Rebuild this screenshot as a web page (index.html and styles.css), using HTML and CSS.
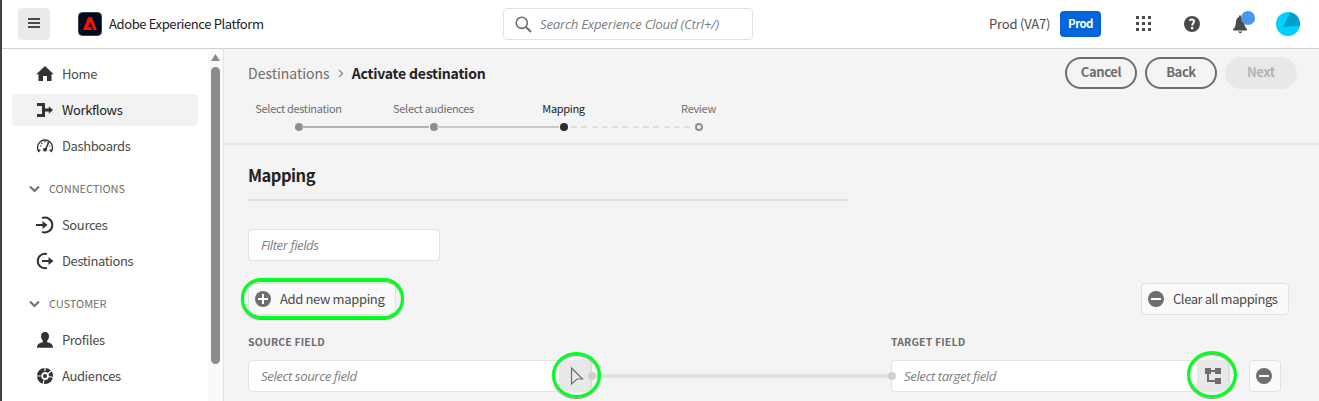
FILE: index.html
```
<!DOCTYPE html>
<html lang="en">
<head>
<meta charset="utf-8">
<title>Adobe Experience Platform</title>
<link rel="stylesheet" href="styles.css">
</head>
<body>
<div class="app">
  <header class="topbar">
    <button class="menu" aria-label="Menu"><svg width="12" height="10"><path d="M0 1h12M0 5h12M0 9h12" stroke="#4b4b4b" stroke-width="2"/></svg></button>
    <svg class="logo" width="24" height="24" viewBox="0 0 24 24"><rect x=".5" y=".5" width="23" height="23" rx="4" fill="#000b1d" stroke="#39414d"/><path d="M10 5.200h4L19 18h-3.600l-3.100-8-2.100 5h2.600l1.200 3H5z" fill="#fa0f00"/></svg>
    <span class="brand">Adobe Experience Platform</span>
    <div class="search"><svg width="17" height="17" viewBox="0 0 17 17" fill="none" stroke="#6e6e6e"><circle cx="6.800" cy="6.800" r="5.600" stroke-width="1.600"/><path d="M11 11l5 5" stroke-width="2"/></svg><span>Search Experience Cloud (Ctrl+/)</span></div>
    <span class="org">Prod (VA7)</span>
    <span class="env">Prod</span>
    <svg class="apps" width="16" height="16" fill="#4b4b4b"><path d="M0 0h3v3H0zM6 0h3v3H6zM12 0h3v3h-3zM0 6h3v3H0zM6 6h3v3H6zM12 6h3v3h-3zM0 12h3v3H0zM6 12h3v3H6zM12 12h3v3h-3z"/></svg>
    <svg class="help" width="16" height="16" viewBox="0 0 16 16"><circle cx="8" cy="8" r="8" fill="#4b4b4b"/><path d="M5.300 4.300Q8 2.700 9.800 4.200C11.400 6 8.200 7 8.200 9.400" fill="none" stroke="#fff" stroke-width="2"/><circle cx="8.100" cy="12.100" r="1.300" fill="#fff"/></svg>
    <svg class="bell" width="24" height="24" viewBox="0 0 24 24"><path d="M1.200 19.500V18c2-1.500 2.500-3.500 2.800-7C4.200 8 5.500 6.500 7 6V4.500h2V6c2.600 1 3.200 3 3.400 6 .2 3 .8 4.600 2.600 6v1.500zM6 20.500h4.500Q8.200 24 6 20.500z" fill="#4b4b4b"/><circle cx="16" cy="7" r="7" fill="#4b96f3"/></svg>
    <svg class="avatar" width="24" height="24" viewBox="0 0 24 24"><circle cx="12" cy="12" r="12" fill="#00cfff"/><path d="M14.200.2A12 12 0 0 1 23.800 14L7 15z" fill="#00a0cc"/></svg>
  </header>
  <div class="body">
    <nav class="sidebar">
      <a class="item"><svg width="18" height="18" viewBox="0 0 18 18" fill="#323232"><path d="M9 1l8.700 8.200H15.500V16h-4.500v-5H7v5H2.500V9.200H.3z"/></svg><span>Home</span></a>
      <a class="item active"><svg width="18" height="18" viewBox="0 0 18 18"><path d="M1 3.500h6.500v11H1M7.500 9H14" fill="none" stroke="#323232" stroke-width="3"/><path d="M12.800 5.300L17 9l-4.200 3.700z" fill="#323232"/></svg><span>Workflows</span></a>
      <a class="item"><svg width="18" height="18" viewBox="0 0 18 18"><path d="M3 15a7.500 7.500 0 1 1 12 0" fill="none" stroke="#323232" stroke-width="1.300"/><path d="M2.200 14.300l2.100-1.500M15.800 14.300l-2.100-1.500" stroke="#323232" stroke-width="1.500"/><path d="M4 9h1.500M5.400 6l1 1M9 4v1.500M12.600 5l-1 1M13 9h1.200" stroke="#323232" stroke-width="1.200"/><path d="M12.500 5.800l-3 6.800" stroke="#323232" stroke-width="1.500"/><circle cx="9" cy="12.700" r="1.900" fill="#323232"/></svg><span>Dashboards</span></a>
      <div class="group"><svg width="12" height="8"><path d="M1 1.500l4.500 4.500L10 1.500" fill="none" stroke="#6e6e6e" stroke-width="2"/></svg><span>CONNECTIONS</span></div>
      <a class="item"><svg width="18" height="18" viewBox="0 0 18 18"><path d="M6 2.200A7.400 7.400 0 1 1 6 15.800" fill="none" stroke="#323232" stroke-width="2"/><path d="M0 8h6.500V5l5 4-5 4v-3H0z" fill="#323232"/></svg><span>Sources</span></a>
      <a class="item"><svg width="18" height="18" viewBox="0 0 18 18"><path d="M11 2.100a7.200 7.200 0 1 0 0 13.800" fill="none" stroke="#323232" stroke-width="2"/><path d="M6 8h6.500V5l5 4-5 4v-3H6z" fill="#323232"/></svg><span>Destinations</span></a>
      <div class="group"><svg width="12" height="8"><path d="M1 1.500l4.500 4.500L10 1.500" fill="none" stroke="#6e6e6e" stroke-width="2"/></svg><span>CUSTOMER</span></div>
      <a class="item"><svg width="18" height="18" viewBox="0 0 18 18" fill="#323232"><path d="M9 1c2.700 0 4 1.800 4 4.300 0 2-.9 3.400-1.800 4.500v1.500c3 .8 5.800 1.400 5.800 5.400H1c0-4 2.800-4.600 5.800-5.400V9.800C5.900 8.700 5 7.300 5 5.300 5 2.800 6.300 1 9 1z"/></svg><span>Profiles</span></a>
      <a class="item"><svg width="18" height="18" viewBox="0 0 18 18"><circle cx="9" cy="9" r="6" fill="none" stroke="#323232" stroke-width="4.200"/><circle cx="9" cy="9" r="2" fill="#323232"/><path d="M9 4V0M12 6.500l5-4M12.500 9.500l5 1M8 13l-1 5M4.500 9H0" stroke="#fff" stroke-width="1.200"/></svg><span>Audiences</span></a>
    </nav>
    <div class="scroll"><svg width="9" height="7"><path d="M4.500 0L9 7H0z" fill="#8a8a8a"/></svg><i></i></div>
    <main class="main">
      <section class="pagehead">
        <div class="crumbrow">
          <div class="crumbs"><span class="crumb">Destinations</span><svg width="6" height="9"><path d="M1 1l3.500 3.500L1 8" fill="none" stroke="#8e8e8e" stroke-width="1.400"/></svg><b>Activate destination</b></div>
          <div class="actions"><button class="pill">Cancel</button><button class="pill">Back</button><button class="pill disabled">Next</button></div>
        </div>
        <div class="steps">
          <div class="step"><span>Select destination</span><i class="dot"></i></div>
          <div class="step"><span>Select audiences</span><i class="dot"></i></div>
          <div class="step current"><span>Mapping</span><i class="dot"></i></div>
          <div class="step todo"><span>Review</span><i class="dot"></i></div>
        </div>
      </section>
      <section class="content">
        <h1>Mapping</h1>
        <div class="rule"></div>
        <div class="input filter"><span>Filter fields</span></div>
        <div class="toolbar">
          <button class="btn add ringed"><svg width="16" height="16"><circle cx="8" cy="8" r="8" fill="#6e6e6e"/><path d="M3 8h10M8 3v10" stroke="#fff" stroke-width="2"/></svg><span>Add new mapping</span></button>
          <button class="btn clear"><svg width="16" height="16"><circle cx="8" cy="8" r="8" fill="#6e6e6e"/><path d="M3 8h10" stroke="#fff" stroke-width="2"/></svg><span>Clear all mappings</span></button>
        </div>
        <div class="fields">
          <div class="col source"><label>SOURCE FIELD</label>
            <div class="input"><span>Select source field</span><button class="pick ringed"><svg width="14" height="18"><path d="M1.500 1l11 11H7l-5.500 5z" fill="none" stroke="#6e6e6e" stroke-width="1.200"/></svg></button></div></div>
          <div class="link"></div>
          <div class="col target"><label>TARGET FIELD</label>
            <div class="input"><span>Select target field</span><button class="pick ringed"><svg width="16" height="16"><path d="M0 0h6v2h4V0h6v6h-6V4H6v2H4v6h6v-2h6v6h-6v-2H2V6H0z" fill="#6e6e6e"/></svg></button></div></div>
          <button class="btn remove"><svg width="16" height="16"><circle cx="8" cy="8" r="8" fill="#6e6e6e"/><path d="M3 8h10" stroke="#fff" stroke-width="2"/></svg></button>
        </div>
      </section>
    </main>
  </div>
</div>
</body>
</html>
```
FILE: styles.css
```
*, *::before, *::after { box-sizing: border-box; }
body { margin: 0; background: #fff; overflow: hidden; color: #4b4b4b; font: 13px/18px "Noto Sans CJK SC", "Noto Sans", sans-serif; letter-spacing: -.38px; }
svg { display: block; flex: none; }
button { font: inherit; letter-spacing: inherit; color: inherit; margin: 0; padding: 0; border: 0; background: none; }
span, b, h1, label { white-space: nowrap; }
.app { width: 1319px; height: 401px; border-left: 2px solid #414246; display: flex; flex-direction: column; overflow: hidden; }

.topbar { height: 49px; flex: none; border-bottom: 1px solid #d0d3d0; display: flex; align-items: center; padding-left: 16px; }
.menu { width: 32px; height: 32px; border-radius: 4px; background: #eaeaea; display: grid; place-items: center; padding-bottom: 2px; }
.logo { margin-left: 28px; }
.brand { width: 401px; padding-left: 7px; color: #222; }
.search { width: 250px; height: 32px; border: 1px solid #e1e1e1; border-radius: 4px; display: flex; align-items: center; gap: 8px; padding-left: 11px; }
.search, .input { color: #808080; font-family: "Open Sans", "Noto Sans", sans-serif; font-style: italic; font-size: 13.3px; letter-spacing: -.47px; }
.search { letter-spacing: -.28px; }
.search span, .input span { padding-bottom: 1px; }
.org { width: 71px; margin-left: 236px; letter-spacing: -.2px; }
.env { width: 41px; height: 26px; border-radius: 4px; background: #0265dc; color: #fff; font-weight: bold; font-size: 11.5px; line-height: 25px; letter-spacing: -.6px; text-align: center; }
.apps { margin-left: 35px; }
.help { margin-left: 32px; }
.bell { margin: -3px 0 0 32px; }
.avatar { margin-left: 20px; }

.body { display: flex; flex: 1; min-height: 0; }
.sidebar { width: 206px; padding: 9px 10px 0; display: flex; flex-direction: column; gap: 4px; }
.item { height: 32px; flex: none; display: flex; align-items: center; gap: 8px; padding-left: 24px; border-radius: 4px; }
.item.active { background: #f2f2f2; color: #222; }
.group { height: 39px; flex: none; padding: 5px 0 0 17px; display: flex; align-items: center; gap: 8px; font-size: 11px; letter-spacing: -.05px; color: #6e6e6e; }
.group svg { margin-top: 2px; }
.scroll { width: 15px; background: #fafafa; padding: 5px 0 0 3px; }
.scroll i { display: block; width: 9px; height: 297px; margin-top: 6px; border-radius: 5px; background: #8b8b8b; }
.main { flex: 1; background: #f4f4f4; border-left: 1px solid #e4e4e4; min-width: 0; }

.pagehead { height: 96px; border-bottom: 2px solid #e7e7e7; padding: 8px 22px 0 24px; }
.crumbrow { display: flex; justify-content: space-between; align-items: center; height: 32px; }
.crumbs { display: flex; align-items: center; font-size: 14px; letter-spacing: 0; color: #6e6e6e; gap: 8px; }
.crumbs b { color: #222; letter-spacing: -.2px; }
.actions { display: flex; gap: 8px; }
.pill { width: 72px; height: 32px; border: 2px solid #6e6e6e; border-radius: 16px; font-weight: bold; color: #6e6e6e; padding-bottom: 2px; }
.disabled { background: #e8e8e8; border-color: #e8e8e8; color: #b5b5b5; }
.steps { display: flex; margin: 10px 0 0 -17px; }
.step { width: 135px; height: 32px; display: flex; flex-direction: column; align-items: center; font-size: 11px; letter-spacing: -.33px; line-height: 18px; color: #6e6e6e; position: relative; }
.step .dot { flex: none; width: 8px; height: 8px; border-radius: 50%; background: #8e8e8e; margin-top: 6px; }
.step:not(:last-child)::after { content: ""; position: absolute; left: 71px; top: 27px; width: 127px; height: 2px; background: #b3b3b3; }
.step:nth-child(2)::after { width: 122px; background: #c9c9c9; }
.step.current { color: #222; margin-left: -5px; }
.step.current .dot { background: #2c2c2c; }
.step.current::after { left: 75px; width: 121px; background: repeating-linear-gradient(90deg, #e0e0e0 0 6px, transparent 6px 10.300px); }
.step.todo .dot { background: transparent; border: 2px solid #8e8e8e; }

.content { padding: 17px 30px 0 24px; }
h1 { margin: 0; font-size: 16.5px; line-height: 26px; letter-spacing: -.5px; color: #222; }
.rule { width: 600px; height: 2px; background: #e1e1e1; margin-top: 11px; }
.input { height: 32px; border: 1px solid #e1e1e1; border-radius: 4px; background: #fff; display: flex; align-items: center; padding-left: 12px; }
.filter { width: 192px; margin-top: 28px; }
.toolbar { display: flex; justify-content: space-between; margin-top: 22px; }
.btn { height: 32px; border: 1px solid #e1e1e1; border-radius: 4px; background: #fafafa; display: flex; align-items: center; gap: 9px; padding-left: 6px; }
.add, .clear { width: 148px; letter-spacing: -.36px; }
.clear { letter-spacing: -.43px; }
.ringed { position: relative; }
.ringed::before { content: ""; position: absolute; z-index: 2; border: 3px solid #00ff1e; border-radius: 50%; box-shadow: 0 1px 1px #888, inset 0 1px 1px #888; }
.add::before { left: -8px; top: -6px; width: 163px; height: 41px; border-radius: 20px; }
.fields { display: flex; align-items: flex-end; margin-top: 17px; }
.col { display: flex; flex-direction: column; }
label { font-size: 10.5px; line-height: 20px; letter-spacing: .15px; font-weight: bold; color: #6e6e6e; margin-bottom: 8px; }
.source { width: 344px; }
.target { width: 339px; }
.pick { width: 32px; height: 32px; margin-left: auto; flex: none; background: #e8e8e8; border-right: 1px solid #ddd; display: grid; place-items: center; }
.pick::before { left: -7px; top: -8px; width: 49px; height: 46px; }
.target .pick::before { left: -10px; top: -9px; width: 50px; height: 47px; }
.source .pick { padding-left: 4px; }
.link { width: 299px; height: 4px; margin-bottom: 14px; background: #e0e0e0; position: relative; z-index: 1; }
.link::before, .link::after { content: ""; position: absolute; top: -2px; width: 8px; height: 8px; border-radius: 50%; background: #d0d0d0; }
.link::before { left: -4px; }
.link::after { right: -5px; }
.remove { width: 32px; margin-left: 19px; padding-left: 6px; }
```
